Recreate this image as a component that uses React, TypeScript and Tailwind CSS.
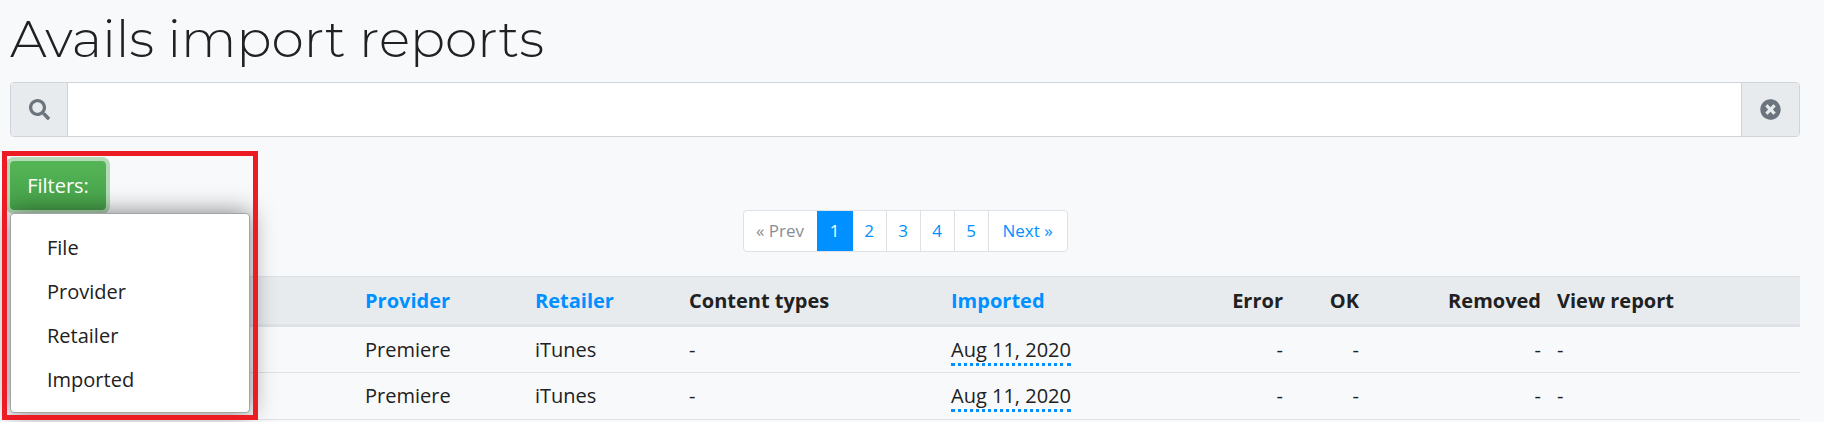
import React, { useState } from "react";
import { FaSearch, FaTimesCircle } from "react-icons/fa";

interface Column {
  label: string;
  width: string;
  sortable?: boolean;
  right?: boolean;
}

interface Report {
  id: number;
  file: string;
  provider: string;
  retailer: string;
  contentTypes: string;
  imported: string;
  error: string;
  ok: string;
  removed: string;
  report: string;
}

const columns: Column[] = [
  { label: "", width: "w-[347px]" },
  { label: "Provider", width: "w-[170px]", sortable: true },
  { label: "Retailer", width: "w-[154px]", sortable: true },
  { label: "Content types", width: "w-[262px]" },
  { label: "Imported", width: "w-[257px]", sortable: true },
  { label: "Error", width: "w-[91px]", right: true },
  { label: "OK", width: "w-[76px]", right: true },
  { label: "Removed", width: "w-[182px]", right: true },
  { label: "View report", width: "w-[251px]" },
];

const reports: Report[] = [1, 2].map((id) => ({
  id,
  file: "",
  provider: "Premiere",
  retailer: "iTunes",
  contentTypes: "-",
  imported: "Aug 11, 2020",
  error: "-",
  ok: "-",
  removed: "-",
  report: "-",
}));

const filters = ["File", "Provider", "Retailer", "Imported"];
const pages = [1, 2, 3, 4, 5];

function SearchBar() {
  const [query, setQuery] = useState("");

  return (
    <div className="flex h-[55px] overflow-hidden rounded border border-[#ced4da] bg-white">
      <label
        htmlFor="search"
        aria-label="Search"
        className="flex w-[57px] items-center justify-center border-r border-[#ced4da] bg-[#e8ebee] text-[#6c757d]"
      >
        <FaSearch className="h-[21px] w-[21px]" />
      </label>
      <input
        id="search"
        type="text"
        value={query}
        onChange={(e) => setQuery(e.target.value)}
        className="min-w-0 flex-1 px-4 outline-none"
      />
      <button
        type="button"
        aria-label="Clear search"
        onClick={() => setQuery("")}
        className="flex w-[58px] items-center justify-center border-l border-[#ced4da] bg-[#e8ebee] text-[#6c757d]"
      >
        <FaTimesCircle className="h-[21px] w-[21px]" />
      </button>
    </div>
  );
}

function FilterMenu() {
  return (
    <div className="relative">
      <button
        type="button"
        aria-haspopup="menu"
        aria-expanded="true"
        className="h-[49px] w-[96px] rounded bg-linear-to-b from-[#54b556] to-[#46a149] pt-px text-white shadow-[0_0_0_4px_rgba(76,175,80,0.4)]"
      >
        Filters:
      </button>
      <ul
        role="menu"
        className="absolute top-[52px] left-0 z-10 w-[240px] rounded border border-[#a3a4a5] bg-white pt-3 pb-[10px] shadow-[0_0_24px_rgba(0,0,0,0.5)]"
      >
        {filters.map((filter) => (
          <li key={filter} role="none">
            <button
              type="button"
              role="menuitem"
              className="block h-11 w-full px-9 text-left hover:bg-gray-100"
            >
              {filter}
            </button>
          </li>
        ))}
      </ul>
      <div className="pointer-events-none absolute -top-[10px] -left-2 z-20 h-[269px] w-[256px] border-5 border-[#ed1c24]" />
    </div>
  );
}

function Pagination() {
  return (
    <nav
      aria-label="Pages"
      className="mx-auto flex h-[42px] w-fit overflow-hidden rounded border border-[#dee2e6] bg-white text-[17px] text-[#0090ff]"
    >
      <button type="button" disabled className="w-[73px] text-[#868e96]">
        « Prev
      </button>
      {pages.map((page) =>
        page === 1 ? (
          <a
            key={page}
            href="#1"
            aria-current="page"
            className="-my-px flex w-9 items-center justify-center bg-[#0090ff] text-white"
          >
            {page}
          </a>
        ) : (
          <a
            key={page}
            href={`#${page}`}
            className="flex w-[34px] items-center justify-center border-r border-[#dee2e6]"
          >
            {page}
          </a>
        ),
      )}
      <a href="#2" className="flex w-[78px] items-center justify-center">
        Next »
      </a>
    </nav>
  );
}

function ReportsTable() {
  return (
    <table className="w-full table-fixed border-collapse">
      <thead>
        <tr className="h-[49px] border-t border-b-3 border-[#dee2e6] bg-[#e8ebee]">
          {columns.map((column) => (
            <th
              key={column.label}
              scope="col"
              className={`${column.width} px-2 font-bold whitespace-nowrap ${column.right ? "text-right" : "text-left"}`}
            >
              {column.sortable ? (
                <a href="#sort" className="text-[#0090ff]">
                  {column.label}
                </a>
              ) : (
                column.label
              )}
            </th>
          ))}
        </tr>
      </thead>
      <tbody>
        {reports.map((row) => (
          <tr key={row.id} className="h-[47px] border-b border-[#dee2e6]">
            <td className="px-2">{row.file}</td>
            <td className="px-2">{row.provider}</td>
            <td className="px-2">{row.retailer}</td>
            <td className="px-2">{row.contentTypes}</td>
            <td className="px-2">
              <span className="border-b-3 border-dotted border-[#0090ff]">
                {row.imported}
              </span>
            </td>
            <td className="px-2 text-right">{row.error}</td>
            <td className="px-2 text-right">{row.ok}</td>
            <td className="px-2 text-right">{row.removed}</td>
            <td className="px-2">{row.report}</td>
          </tr>
        ))}
      </tbody>
    </table>
  );
}

export default function App() {
  return (
    <div className="min-h-screen bg-[#f8f9fb] pr-6 pl-[10px] font-['Segoe_UI','Open_Sans',sans-serif] text-[20px] text-[#212121]">
      <h1 className="pt-2 pb-3 font-['Montserrat','Inter',sans-serif] text-[52px] leading-[62px] font-light text-[#212121]">
        Avails import reports
      </h1>
      <SearchBar />
      <div className="pt-6">
        <FilterMenu />
      </div>
      <Pagination />
      <div className="pt-6">
        <ReportsTable />
      </div>
    </div>
  );
}
